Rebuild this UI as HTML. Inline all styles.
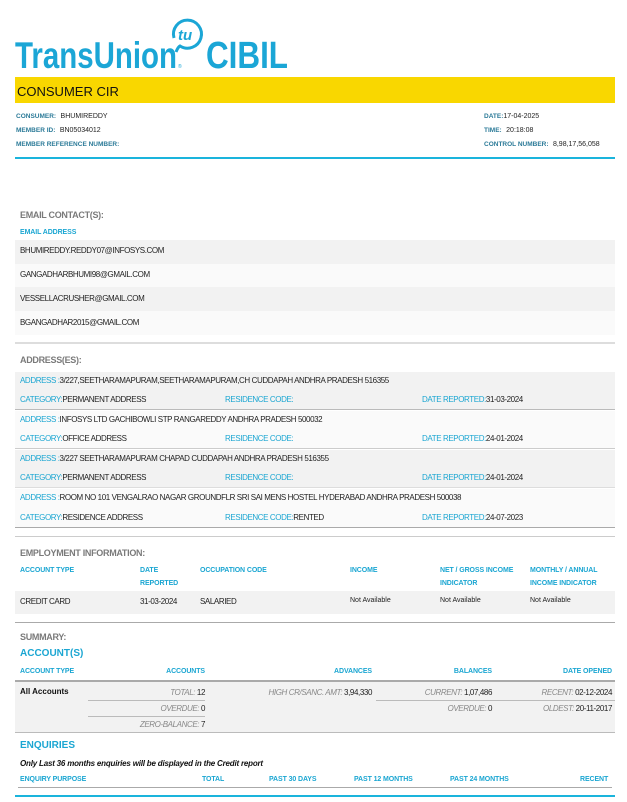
<!DOCTYPE html>
<html><head><meta charset="utf-8"><style>
*{margin:0;padding:0;box-sizing:border-box}
body{width:627px;height:802px;background:#fff;position:relative;font-family:"Liberation Sans",Arial,sans-serif;overflow:hidden;color:#222}
.t{position:absolute;white-space:nowrap;line-height:10px}
.b{color:#1ba6d2}
.lb{color:#2b7a98;font-weight:bold;font-size:6.5px;letter-spacing:0}
.h{color:#7a7a7a;font-weight:bold;font-size:9px;letter-spacing:-0.3px}
.ch{color:#1ba6d2;font-weight:bold;font-size:7px;letter-spacing:-0.1px}
.r{position:absolute}
.s8{font-size:8px;letter-spacing:-0.4px}
.sm{font-size:7px;letter-spacing:0}
.i{font-style:italic;color:#888}
</style></head><body>
<!-- logo -->
<svg class="r" style="left:0;top:0" width="300" height="76" viewBox="0 0 300 76">
<text x="15" y="68" font-family="Liberation Sans" font-size="37" font-weight="bold" fill="#1ba6d6" textLength="162" lengthAdjust="spacingAndGlyphs">TransUnion</text>
<text x="178" y="68" font-family="Liberation Sans" font-size="5" fill="#1ba6d6">®</text>
<text x="206" y="68" font-family="Liberation Sans" font-size="38" font-weight="bold" fill="#1ba6d6" textLength="82" lengthAdjust="spacingAndGlyphs">CIBIL</text>
<path d="M176 52 Q178 47 180 46 A14 14 0 1 0 174 38" fill="none" stroke="#1ba6d6" stroke-width="3"/>
<text x="178" y="40" font-family="Liberation Sans" font-size="15" font-weight="bold" font-style="italic" fill="#1ba6d6">tu</text>
</svg>
<!-- yellow -->
<div class="r" style="left:15px;top:77px;width:600px;height:26px;background:#f9d700"></div>
<div class="t" style="left:17px;top:85px;font-size:13px;line-height:13px;color:#111">CONSUMER CIR</div>
<div class="t" style="left:16px;top:109px"><span class="lb">CONSUMER:</span> <span class="sm">BHUMIREDDY</span></div>
<div class="t" style="left:16px;top:123px"><span class="lb">MEMBER ID:</span> <span class="sm">BN05034012</span></div>
<div class="t" style="left:16px;top:137px"><span class="lb">MEMBER REFERENCE NUMBER:</span></div>
<div class="t" style="left:484px;top:109px"><span class="lb">DATE:</span><span class="sm">17-04-2025</span></div>
<div class="t" style="left:484px;top:123px"><span class="lb">TIME:</span> <span class="sm">20:18:08</span></div>
<div class="t" style="left:484px;top:137px"><span class="lb">CONTROL NUMBER:</span> <span class="sm">8,98,17,56,058</span></div>
<div class="r" style="left:15px;top:157px;width:600px;height:2px;background:#1ab4dc"></div>

<!-- email -->
<div class="t h" style="left:20px;top:210px">EMAIL CONTACT(S):</div>
<div class="t ch" style="left:20px;top:228px">EMAIL ADDRESS</div>
<div class="r" style="left:15px;top:240px;width:600px;height:24px;background:#f2f2f2"></div>
<div class="r" style="left:15px;top:264px;width:600px;height:23px;background:#fafafa"></div>
<div class="r" style="left:15px;top:287px;width:600px;height:24px;background:#f2f2f2"></div>
<div class="r" style="left:15px;top:311px;width:600px;height:24px;background:#fafafa"></div>
<div class="t s8" style="left:20px;top:246px">BHUMIREDDY.REDDY07@INFOSYS.COM</div>
<div class="t s8" style="left:20px;top:270px">GANGADHARBHUMI98@GMAIL.COM</div>
<div class="t s8" style="left:20px;top:294px">VESSELLACRUSHER@GMAIL.COM</div>
<div class="t s8" style="left:20px;top:318px">BGANGADHAR2015@GMAIL.COM</div>
<div class="r" style="left:15px;top:342px;width:600px;height:2px;background:#ddd"></div>

<!-- address -->
<div class="t h" style="left:20px;top:355px">ADDRESS(ES):</div>
<div class="r" style="left:15px;top:372px;width:600px;height:38px;background:#f2f2f2;border-bottom:1px solid #bbb"></div>
<div class="r" style="left:15px;top:411px;width:600px;height:38px;background:#fafafa;border-bottom:1px solid #ccc"></div>
<div class="r" style="left:15px;top:450px;width:600px;height:38px;background:#f2f2f2;border-bottom:1px solid #ddd"></div>
<div class="r" style="left:15px;top:489px;width:600px;height:39px;background:#fafafa;border-bottom:1px solid #aaa"></div>
<div class="t s8" style="left:20px;top:376px"><span class="b">ADDRESS :</span>3/227,SEETHARAMAPURAM,SEETHARAMAPURAM,CH CUDDAPAH ANDHRA PRADESH 516355</div>
<div class="t s8" style="left:20px;top:395px"><span class="b">CATEGORY:</span>PERMANENT ADDRESS</div>
<div class="t s8 b" style="left:225px;top:395px">RESIDENCE CODE:</div>
<div class="t s8" style="left:422px;top:395px"><span class="b">DATE REPORTED:</span>31-03-2024</div>
<div class="t s8" style="left:20px;top:415px"><span class="b">ADDRESS :</span>INFOSYS LTD GACHIBOWLI STP RANGAREDDY ANDHRA PRADESH 500032</div>
<div class="t s8" style="left:20px;top:434px"><span class="b">CATEGORY:</span>OFFICE ADDRESS</div>
<div class="t s8 b" style="left:225px;top:434px">RESIDENCE CODE:</div>
<div class="t s8" style="left:422px;top:434px"><span class="b">DATE REPORTED:</span>24-01-2024</div>
<div class="t s8" style="left:20px;top:454px"><span class="b">ADDRESS :</span>3/227 SEETHARAMAPURAM CHAPAD CUDDAPAH ANDHRA PRADESH 516355</div>
<div class="t s8" style="left:20px;top:473px"><span class="b">CATEGORY:</span>PERMANENT ADDRESS</div>
<div class="t s8 b" style="left:225px;top:473px">RESIDENCE CODE:</div>
<div class="t s8" style="left:422px;top:473px"><span class="b">DATE REPORTED:</span>24-01-2024</div>
<div class="t s8" style="left:20px;top:493px"><span class="b">ADDRESS :</span>ROOM NO 101 VENGALRAO NAGAR GROUNDFLR SRI SAI MENS HOSTEL HYDERABAD ANDHRA PRADESH 500038</div>
<div class="t s8" style="left:20px;top:513px"><span class="b">CATEGORY:</span>RESIDENCE ADDRESS</div>
<div class="t s8" style="left:225px;top:513px"><span class="b">RESIDENCE CODE:</span>RENTED</div>
<div class="t s8" style="left:422px;top:513px"><span class="b">DATE REPORTED:</span>24-07-2023</div>
<div class="r" style="left:15px;top:536px;width:600px;height:1px;background:#ccc"></div>

<!-- employment -->
<div class="t h" style="left:20px;top:548px">EMPLOYMENT INFORMATION:</div>
<div class="t ch" style="left:20px;top:566px">ACCOUNT TYPE</div>
<div class="t ch" style="left:140px;top:566px">DATE</div>
<div class="t ch" style="left:140px;top:579px">REPORTED</div>
<div class="t ch" style="left:200px;top:566px">OCCUPATION CODE</div>
<div class="t ch" style="left:350px;top:566px">INCOME</div>
<div class="t ch" style="left:440px;top:566px">NET / GROSS INCOME</div>
<div class="t ch" style="left:440px;top:579px">INDICATOR</div>
<div class="t ch" style="left:530px;top:566px">MONTHLY / ANNUAL</div>
<div class="t ch" style="left:530px;top:579px">INCOME INDICATOR</div>
<div class="r" style="left:15px;top:591px;width:600px;height:23px;background:#f2f2f2"></div>
<div class="t s8" style="left:20px;top:597px">CREDIT CARD</div>
<div class="t s8" style="left:140px;top:597px">31-03-2024</div>
<div class="t s8" style="left:200px;top:597px">SALARIED</div>
<div class="t sm" style="left:350px;top:596px">Not Available</div>
<div class="t sm" style="left:440px;top:596px">Not Available</div>
<div class="t sm" style="left:530px;top:596px">Not Available</div>
<div class="r" style="left:15px;top:622px;width:600px;height:1px;background:#aaa"></div>

<!-- summary -->
<div class="t h" style="left:20px;top:632px">SUMMARY:</div>
<div class="t" style="left:20px;top:649px;font-size:10px;font-weight:bold;color:#1ba6d2">ACCOUNT(S)</div>
<div class="t ch" style="left:20px;top:667px">ACCOUNT TYPE</div>
<div class="t ch" style="left:105px;top:667px;width:100px;text-align:right">ACCOUNTS</div>
<div class="t ch" style="left:272px;top:667px;width:100px;text-align:right">ADVANCES</div>
<div class="t ch" style="left:392px;top:667px;width:100px;text-align:right">BALANCES</div>
<div class="t ch" style="left:512px;top:667px;width:100px;text-align:right">DATE OPENED</div>
<div class="r" style="left:15px;top:680px;width:600px;height:53px;background:#f2f2f2;border-top:2px solid #aaa;border-bottom:1px solid #bbb"></div>
<div class="r" style="left:88px;top:700px;width:117px;height:1px;background:#bbb"></div>
<div class="r" style="left:88px;top:716px;width:117px;height:1px;background:#bbb"></div>
<div class="r" style="left:376px;top:700px;width:239px;height:1px;background:#bbb"></div>
<div class="t" style="left:20px;top:687px;font-size:8px;font-weight:bold;color:#111">All Accounts</div>
<div class="t s8" style="left:105px;top:688px;width:100px;text-align:right"><span class="i">TOTAL:</span> 12</div>
<div class="t s8" style="left:105px;top:704px;width:100px;text-align:right"><span class="i">OVERDUE:</span> 0</div>
<div class="t s8" style="left:105px;top:720px;width:100px;text-align:right"><span class="i">ZERO-BALANCE:</span> 7</div>
<div class="t s8" style="left:222px;top:688px;width:150px;text-align:right"><span class="i">HIGH CR/SANC. AMT:</span> 3,94,330</div>
<div class="t s8" style="left:372px;top:688px;width:120px;text-align:right"><span class="i">CURRENT:</span> 1,07,486</div>
<div class="t s8" style="left:372px;top:704px;width:120px;text-align:right"><span class="i">OVERDUE:</span> 0</div>
<div class="t s8" style="left:492px;top:688px;width:120px;text-align:right"><span class="i">RECENT:</span> 02-12-2024</div>
<div class="t s8" style="left:492px;top:704px;width:120px;text-align:right"><span class="i">OLDEST:</span> 20-11-2017</div>

<!-- enquiries -->
<div class="t" style="left:20px;top:741px;font-size:10px;font-weight:bold;color:#1ba6d2">ENQUIRIES</div>
<div class="t" style="left:20px;top:759px;font-size:8px;font-weight:bold;font-style:italic;color:#111;letter-spacing:-0.2px">Only Last 36 months enquiries will be displayed in the Credit report</div>
<div class="t ch" style="left:20px;top:775px">ENQUIRY PURPOSE</div>
<div class="t ch" style="left:202px;top:775px">TOTAL</div>
<div class="t ch" style="left:269px;top:775px">PAST 30 DAYS</div>
<div class="t ch" style="left:354px;top:775px">PAST 12 MONTHS</div>
<div class="t ch" style="left:450px;top:775px">PAST 24 MONTHS</div>
<div class="t ch" style="left:580px;top:775px">RECENT</div>
<div class="r" style="left:18px;top:787px;width:594px;height:1px;background:#aaa"></div>
<div class="r" style="left:15px;top:795px;width:600px;height:2px;background:#1ab4dc"></div>
</body></html>
